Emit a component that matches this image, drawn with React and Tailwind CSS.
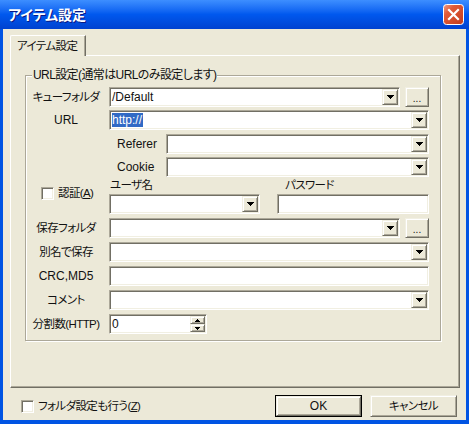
import React from "react";

// classic 3D edges used by the edit / combo / button controls
const sunken =
  "bg-white border border-t-[#ACA899] border-l-[#ACA899] border-r-white border-b-white shadow-[inset_1px_1px_0_#716F64,inset_-1px_-1px_0_#F1EFE2]";
const raised =
  "bg-[#ECE9D8] border border-t-[#F1EFE2] border-l-[#F1EFE2] border-r-[#716F64] border-b-[#716F64] shadow-[inset_1px_1px_0_#FFFFFF,inset_-1px_-1px_0_#ACA899]";

// japanese captions run a little tighter than the latin ones
const jp = "text-[11.5px] tracking-[-0.6px]";

const Arrow = () => (
  <svg width="7" height="4" viewBox="0 0 7 4" shapeRendering="crispEdges">
    <path d="M0 0h7v1h-1v1h-1v1h-1v1h-1v-1h-1v-1h-1v-1h-1z" fill="#000" />
  </svg>
);

const SpinArrow = ({ up }) => (
  <svg width="5" height="3" viewBox="0 0 5 3" shapeRendering="crispEdges">
    {up ? (
      <path d="M2 0h1v1h1v1h1v1h-5v-1h1v-1h1z" fill="#000" />
    ) : (
      <path d="M0 0h5v1h-1v1h-1v1h-1v-1h-1v-1h-1z" fill="#000" />
    )}
  </svg>
);

const Combo = ({ children, className = "" }) => (
  <div className={`flex h-[20px] p-[1px] ${sunken} ${className}`}>
    <div className="flex flex-1 items-center overflow-hidden whitespace-nowrap pl-[1px]">
      {children}
    </div>
    <div className={`flex w-[16px] items-center justify-center ${raised}`}>
      <Arrow />
    </div>
  </div>
);

const Edit = ({ children, className = "" }) => (
  <div className={`flex h-[20px] items-center p-[1px] pl-[2px] ${sunken} ${className}`}>
    {children}
  </div>
);

const Browse = () => (
  <div
    className={`ml-[5px] flex h-[20px] w-[24px] items-center justify-center pb-[2px] text-[10px] leading-none ${raised}`}
  >
    <span className="pt-[5px]">...</span>
  </div>
);

const CheckBox = () => <div className={`h-[13px] w-[13px] ${sunken}`} />;

const Row = ({ label, mt, children, latin }) => (
  <div className={`flex h-[20px] items-center ${mt}`}>
    <span className={`mr-[3px] w-[80px] text-center whitespace-nowrap ${latin ? "" : jp}`}>
      {label}
    </span>
    {children}
  </div>
);

const Button = ({ children, primary }) =>
  primary ? (
    <div className="h-[22px] w-[87px] border border-black">
      <div className={`flex h-full items-center justify-center ${raised}`}>{children}</div>
    </div>
  ) : (
    <div className={`flex h-[22px] w-[87px] items-center justify-center ${raised}`}>
      {children}
    </div>
  );

export default function App() {
  return (
    <div className="flex h-[424px] w-[469px] flex-col overflow-hidden bg-[#0054E3] font-['Liberation_Sans','Noto_Sans_CJK_JP',sans-serif] text-[12px] leading-[14px] text-[#111] [font-feature-settings:'palt']">
      {/* title bar */}
      <div className="flex h-[29px] items-center justify-between bg-gradient-to-b from-[#3D8EFF] via-[#0058EE] to-[#0042D0] pl-[8px] pr-[5px]">
        <span className="text-[14px] font-bold text-white [text-shadow:1px_1px_#0A1883]">
          アイテム設定
        </span>
        <svg width="21" height="21" viewBox="0 0 21 21">
          <defs>
            <linearGradient id="closeFill" x1="0" y1="0" x2="1" y2="1">
              <stop offset="0" stopColor="#F0A08A" />
              <stop offset="0.3" stopColor="#E25B37" />
              <stop offset="1" stopColor="#C13A1B" />
            </linearGradient>
          </defs>
          <rect x="0.5" y="0.5" width="20" height="20" rx="3" fill="url(#closeFill)" stroke="#FFFFFF" />
          <path d="M6 6L15 15M15 6L6 15" stroke="#FFFFFF" strokeWidth="2.2" strokeLinecap="square" />
        </svg>
      </div>

      {/* client area */}
      <div className="mx-[3px] mb-[4px] flex flex-1 flex-col bg-[#ECE9D8]">
        <div className="ml-[7px] flex pt-[6px]">
          <div className={`relative z-10 -mb-[1px] h-[21px] w-[76px] rounded-tl-[2px] border-l border-t border-r border-l-white border-t-white border-r-[#716F64] bg-[#ECE9D8] pl-[6px] pt-[3px] shadow-[inset_-1px_0_0_#ACA899] ${jp}`}>
            アイテム設定
          </div>
        </div>

        <div className="ml-[7px] mr-[6px] h-[333px] border border-l-white border-t-white border-r-[#716F64] border-b-[#716F64] pl-[14px] pt-[12px] shadow-[inset_-1px_-1px_0_#ACA899]">
          <fieldset className="w-[416px] border border-[#ACA899] pb-[6px] pr-[11px] shadow-[inset_1px_1px_0_#FFFFFF,1px_1px_0_#FFFFFF]">
            <legend className="ml-[6px] bg-[#ECE9D8] px-[1px] leading-[14px] tracking-[-0.6px]">
              URL設定(通常はURLのみ設定します)
            </legend>

            <Row label="キューフォルダ" mt="mt-[5px]">
              <Combo className="flex-1">/Default</Combo>
              <Browse />
            </Row>

            <Row label="URL" mt="mt-[3px]" latin>
              <Combo className="flex-1">
                <span className="bg-[#316AC5] pr-[1px] text-white">http://</span>
              </Combo>
            </Row>

            <div className="mt-[4px] flex h-[20px] items-center">
              <span className="ml-[83px] w-[57px] pl-[8px]">Referer</span>
              <Combo className="flex-1" />
            </div>

            <div className="mt-[3px] flex h-[20px] items-center">
              <span className="ml-[83px] w-[57px] pl-[8px]">Cookie</span>
              <Combo className="flex-1" />
            </div>

            {/* authentication */}
            <div className="flex h-[37px]">
              <div className="flex w-[83px] items-center gap-[4px] self-start pl-[15px] pt-[9px]">
                <CheckBox />
                <span className={`whitespace-nowrap ${jp}`}>
                  認証(<u>A</u>)
                </span>
              </div>
              <div className="flex w-[151px] flex-col">
                <span className={`h-[17px] pl-[1px] pt-[1px] ${jp}`}>ユーザ名</span>
                <Combo />
              </div>
              <div className="ml-[17px] flex flex-1 flex-col">
                <span className={`h-[17px] pl-[8px] pt-[1px] ${jp}`}>パスワード</span>
                <Edit />
              </div>
            </div>

            <Row label="保存フォルダ" mt="mt-[4px]">
              <Combo className="flex-1" />
              <Browse />
            </Row>

            <Row label="別名で保存" mt="mt-[4px]">
              <Combo className="flex-1" />
            </Row>

            <Row label="CRC,MD5" mt="mt-[4px]" latin>
              <Edit className="flex-1" />
            </Row>

            <Row label="コメント" mt="mt-[4px]">
              <Combo className="flex-1" />
            </Row>

            <Row label="分割数(HTTP)" mt="mt-[4px]">
              <div className={`flex h-[20px] w-[98px] p-[1px] ${sunken}`}>
                <span className="flex flex-1 items-center pl-[1px]">0</span>
                <div className="flex w-[15px] flex-col">
                  <div className={`flex flex-1 items-center justify-center ${raised}`}>
                    <SpinArrow up />
                  </div>
                  <div className={`flex flex-1 items-center justify-center ${raised}`}>
                    <SpinArrow />
                  </div>
                </div>
              </div>
            </Row>
          </fieldset>
        </div>

        {/* footer */}
        <div className="mt-[7px] flex h-[22px] items-center pl-[18px] pr-[9px]">
          <CheckBox />
          <span className={`ml-[4px] whitespace-nowrap ${jp}`}>
            フォルダ設定も行う(<u>Z</u>)
          </span>
          <div className="ml-auto flex gap-[8px]">
            <Button primary>OK</Button>
            <Button>
              <span className={jp}>キャンセル</span>
            </Button>
          </div>
        </div>
      </div>
    </div>
  );
}
